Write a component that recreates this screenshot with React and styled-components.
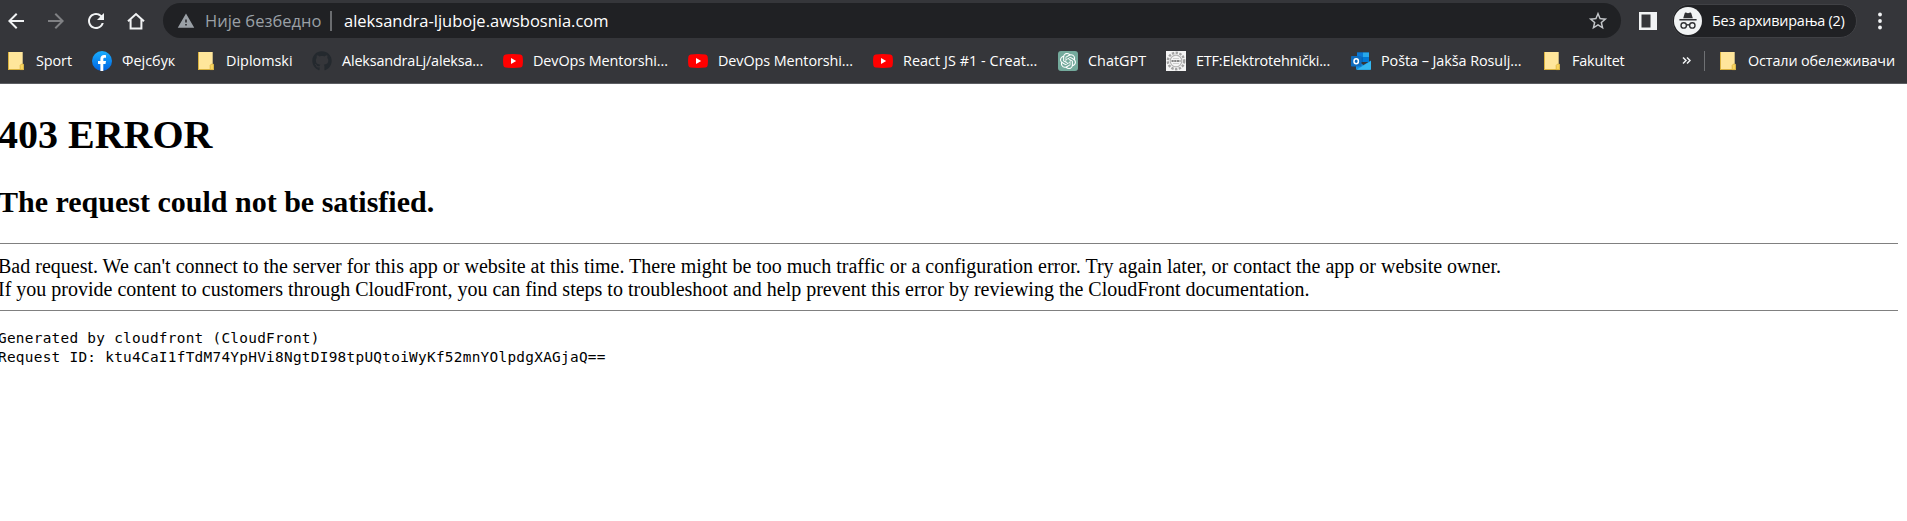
import React from 'react';
import styled, { createGlobalStyle } from 'styled-components';
import { MdArrowBack, MdArrowForward, MdRefresh, MdStarBorder, MdWarning } from 'react-icons/md';
import { SiOpenai } from 'react-icons/si';
import { FaGithub } from 'react-icons/fa';

const GlobalStyle = createGlobalStyle`
  * { box-sizing: border-box; }
  body { margin: 0; background: #fff; overflow: hidden; }
  svg { display: block; flex: none; }
`;

const Browser = styled.div`
  font-family: 'Open Sans', 'Noto Sans', sans-serif;
  color: #fff;
`;

const Chrome = styled.header`
  height: 84px;
  background: #35363a;
  border-bottom: 1px solid #5c5e62;
`;

const Toolbar = styled.div`
  display: flex;
  align-items: center;
  height: 38px;
  padding: 3px 22px 0 4px;
`;

const NavButtons = styled.nav`
  display: flex;
  gap: 16px;
  margin-right: 15px;
`;

const NavButton = styled.span`
  display: flex;
  align-items: center;
  justify-content: center;
  width: 24px;
  height: 24px;
  color: ${(p) => (p.$disabled ? '#808184' : '#f1f3f4')};
`;

const AddressBar = styled.div`
  display: flex;
  align-items: center;
  flex: 1;
  height: 35px;
  padding: 0 12px 0 14px;
  border-radius: 18px;
  background: #202124;
  font-size: 16.5px;
  line-height: 24px;
  white-space: nowrap;
`;

const Security = styled.span`
  width: 125px;
  margin-left: 10px;
  color: #9aa0a6;
`;

const Divider = styled.span`
  width: ${(p) => p.$w || 1}px;
  height: 20px;
  background: ${(p) => p.$color || '#6b6d70'};
`;

const Url = styled.span`
  flex: 1;
  margin-left: 12px;
`;

const PanelButton = styled.span`
  margin: 0 15px 0 18px;
`;

const IncognitoPill = styled.div`
  display: flex;
  align-items: center;
  width: 185px;
  height: 34px;
  padding-left: 1px;
  border: 1px solid #404145;
  border-radius: 17px;
  background: #202124;
  font-size: 14.4px;
  letter-spacing: -0.22px;
  white-space: nowrap;
`;

const PillLabel = styled.span`
  margin-left: 10px;
`;

const MenuButton = styled.span`
  margin-left: 18px;
`;

const BookmarksBar = styled.div`
  display: flex;
  align-items: center;
  height: 45px;
  padding: 0 12px 0 6px;
  gap: 20px;
`;

const Bookmark = styled.div`
  display: flex;
  align-items: center;
  gap: 10px;
`;

const BookmarkLabel = styled.span`
  width: ${(p) => p.$w}px;
  font-size: 14.4px;
  line-height: 20px;
  letter-spacing: ${(p) => p.$ls}px;
  white-space: nowrap;
`;

const Overflow = styled.div`
  display: flex;
  align-items: center;
  gap: 13px;
  margin-left: auto;
`;

const IconTile = styled.span`
  display: flex;
  align-items: center;
  justify-content: center;
  width: 20px;
  height: 20px;
  border-radius: 3px;
  background: #74aa9c;
`;

const Page = styled.main`
  margin: 0 9px 0 -2px;
  color: #000;
  font-family: 'Liberation Serif', serif;
  font-size: 20px;
  line-height: 23px;
`;

const Title = styled.h1`
  margin: 0;
  padding-top: 28px;
  font-size: 40px;
  line-height: 46px;
`;

const Subtitle = styled.h2`
  margin: 26px 0 24px;
  font-size: 30px;
  line-height: 35px;
`;

const Rule = styled.hr`
  height: 1px;
  margin: 0;
  border: 0;
  background: #808080;
`;

const Message = styled.p`
  margin: 11px 0 9px;
  white-space: nowrap;
`;

const Details = styled.pre`
  margin: 18px 0 0;
  font-family: 'DejaVu Sans Mono', monospace;
  font-size: 14.4px;
  line-height: 19px;
  letter-spacing: 0.273px;
`;

const HomeIcon = () => (
  <svg width="24" height="24" viewBox="0 0 24 24" fill="none" stroke="currentColor" strokeWidth="2">
    <path d="M4 12.2 12 5l8 7.2M6.6 10.6V19.4h10.8V10.6" />
  </svg>
);

const PanelIcon = () => (
  <svg width="18" height="18" viewBox="0 0 18 18">
    <path fill="#f1f3f4" fillRule="evenodd" d="M0 0h18v18H0zM2.5 2.5v13h9v-13z" />
  </svg>
);

const IncognitoIcon = () => (
  <svg width="28" height="28" viewBox="0 0 28 28">
    <circle cx="14" cy="14" r="14" fill="#f1f3f4" />
    <g fill="#303134">
      <path d="M9.2 11.2 10.7 6.2Q11 5.4 11.9 5.6L14 6.2l2.1-.6q.9-.2 1.2.6l1.5 5z" />
      <rect x="5.4" y="12" width="17.2" height="1.5" />
    </g>
    <g fill="none" stroke="#303134" strokeWidth="1.4">
      <circle cx="9.7" cy="18.4" r="2.7" />
      <circle cx="18.3" cy="18.4" r="2.7" />
      <path d="M12.3 18.2q1.7-1 3.4 0" />
    </g>
  </svg>
);

const DotsIcon = () => (
  <svg width="10" height="20" viewBox="0 0 10 20" fill="#f1f3f4">
    <circle cx="5" cy="3.5" r="1.9" />
    <circle cx="5" cy="10" r="1.9" />
    <circle cx="5" cy="16.5" r="1.9" />
  </svg>
);

const FolderIcon = () => (
  <svg width="20" height="20" viewBox="0 0 20 20">
    <path fill="#ffe69b" d="M2 1h14.7v12.2h.9V19H2z" />
    <path fill="#d9b23f" d="M2 18h15.6v1H2zM2 1h1v18H2z" />
    <path fill="#fbd65f" stroke="#d9b23f" strokeWidth=".8" d="M14.2 18.6v-4.2l1-1.2h2.2v5.4z" />
  </svg>
);

const FacebookIcon = () => (
  <svg width="20" height="20" viewBox="0 0 20 20">
    <defs>
      <linearGradient id="fb" x1="0" y1="0" x2="0" y2="1">
        <stop offset="0" stopColor="#19afff" />
        <stop offset="1" stopColor="#0062e0" />
      </linearGradient>
    </defs>
    <circle cx="10" cy="10" r="10" fill="url(#fb)" />
    <path fill="#fff" d="M8.4 19.9v-6.9H6V10h2.4V8c0-2.6 1.5-3.9 3.7-3.9.8 0 1.7.1 1.9.2v2.5h-1.3c-1.1 0-1.4.6-1.4 1.3V10H14l-.5 3h-2.2v6.9q-1.4.2-2.9 0z" />
  </svg>
);

const YouTubeIcon = () => (
  <svg width="20" height="20" viewBox="0 0 20 20">
    <path fill="#f00" d="M2.6 3.4Q10 2.7 17.4 3.4q1.9.2 2.2 2.1.7 4.5 0 9-.3 1.9-2.2 2.1-7.4.7-14.8 0Q.7 16.4.4 14.5q-.7-4.5 0-9 .3-1.9 2.2-2.1z" />
    <path fill="#fff" d="M8 7.1v5.8L13.2 10z" />
  </svg>
);

const SealIcon = () => (
  <svg width="20" height="20" viewBox="0 0 20 20">
    <rect width="20" height="20" fill="#f4f4f4" />
    <g fill="none" stroke="#a2a2a2">
      <circle cx="10" cy="10" r="8.2" strokeWidth="2.4" strokeDasharray="2.4 1.4" />
      <circle cx="10" cy="10" r="5.8" strokeWidth="1.2" stroke="#b4b4b4" />
      <path strokeWidth="2" stroke="#858585" strokeDasharray="2.2 .5" d="M5.5 10h9" />
      <path strokeWidth=".8" stroke="#c4c4c4" d="M7 7.5h6M7 12.5h6" />
    </g>
  </svg>
);

const OutlookIcon = () => (
  <svg width="20" height="20" viewBox="0 0 20 20">
    <path fill="#0364b8" d="M6 1.5h12V11H6z" />
    <path fill="#0a78d4" d="M6 1.5h6v4.7H6z" />
    <path fill="#28a8ea" d="M12 1.5h6v4.7h-6z" />
    <path fill="#0078d4" d="M12 6.2h6V11h-6z" />
    <path fill="#1490df" d="M5 9.5 12.5 14 20 9.5V18q0 .8-.8.8H5.8Q5 18.8 5 18z" />
    <path fill="#35b8f1" d="m20 10-14.5 8.7h13.7q.8 0 .8-.8z" />
    <rect y="5" width="10.5" height="10.5" rx=".8" fill="#0f6cbd" />
    <ellipse cx="5.2" cy="10.2" rx="2.2" ry="2.5" fill="none" stroke="#fff" strokeWidth="1.5" />
  </svg>
);

const GithubMark = () => <FaGithub size={20} color="#24292e" />;

const ChatIcon = () => (
  <IconTile>
    <SiOpenai size={16} color="#fff" />
  </IconTile>
);

const ChevronsIcon = () => (
  <svg width="9" height="10" viewBox="0 0 9 10" fill="none" stroke="#f1f3f4" strokeWidth="1.5">
    <path d="m1 1.5 3 3-3 3M5 1.5l3 3-3 3" />
  </svg>
);

const bookmarks = [
  { icon: FolderIcon, label: 'Sport', w: 36, ls: -0.08 },
  { icon: FacebookIcon, label: 'Фејсбук', w: 54, ls: 0 },
  { icon: FolderIcon, label: 'Diplomski', w: 66, ls: 0 },
  { icon: GithubMark, label: 'AleksandraLj/aleksa...', w: 141, ls: -0.16 },
  { icon: YouTubeIcon, label: 'DevOps Mentorshi...', w: 135, ls: -0.08 },
  { icon: YouTubeIcon, label: 'DevOps Mentorshi...', w: 135, ls: -0.08 },
  { icon: YouTubeIcon, label: 'React JS #1 - Creat...', w: 135, ls: 0.05 },
  { icon: ChatIcon, label: 'ChatGPT', w: 58, ls: 0 },
  { icon: SealIcon, label: 'ETF:Elektrotehnički...', w: 135, ls: -0.18 },
  { icon: OutlookIcon, label: 'Pošta – Jakša Rosulj...', w: 141, ls: -0.06 },
  { icon: FolderIcon, label: 'Fakultet', w: 53, ls: -0.15 },
];

export default function App() {
  return (
    <Browser>
      <GlobalStyle />
      <Chrome>
        <Toolbar>
          <NavButtons>
            <NavButton><MdArrowBack size={24} /></NavButton>
            <NavButton $disabled><MdArrowForward size={24} /></NavButton>
            <NavButton><MdRefresh size={24} /></NavButton>
            <NavButton><HomeIcon /></NavButton>
          </NavButtons>
          <AddressBar>
            <MdWarning size={18} color="#9aa0a6" />
            <Security>Није безбедно</Security>
            <Divider $w={2} />
            <Url>aleksandra-ljuboje.awsbosnia.com</Url>
            <MdStarBorder size={22} color="#c4c7ca" />
          </AddressBar>
          <PanelButton><PanelIcon /></PanelButton>
          <IncognitoPill>
            <IncognitoIcon />
            <PillLabel>Без архивирања (2)</PillLabel>
          </IncognitoPill>
          <MenuButton><DotsIcon /></MenuButton>
        </Toolbar>
        <BookmarksBar>
          {bookmarks.map(({ icon: Icon, label, w, ls }, i) => (
            <Bookmark key={i}>
              <Icon />
              <BookmarkLabel $w={w} $ls={ls}>{label}</BookmarkLabel>
            </Bookmark>
          ))}
          <Overflow>
            <ChevronsIcon />
            <Divider $color="#6f7174" />
            <Bookmark>
              <FolderIcon />
              <BookmarkLabel $w={147} $ls={-0.14}>Остали обележивачи</BookmarkLabel>
            </Bookmark>
          </Overflow>
        </BookmarksBar>
      </Chrome>
      <Page>
        <Title>403 ERROR</Title>
        <Subtitle>The request could not be satisfied.</Subtitle>
        <Rule />
        <Message>
          Bad request. We can't connect to the server for this app or website at this time. There might be too much traffic or a configuration error. Try again later, or contact the app or website owner.
          <br />
          If you provide content to customers through CloudFront, you can find steps to troubleshoot and help prevent this error by reviewing the CloudFront documentation.
        </Message>
        <Rule />
        <Details>{`Generated by cloudfront (CloudFront)
Request ID: ktu4CaI1fTdM74YpHVi8NgtDI98tpUQtoiWyKf52mnYOlpdgXAGjaQ==`}</Details>
      </Page>
    </Browser>
  );
}
